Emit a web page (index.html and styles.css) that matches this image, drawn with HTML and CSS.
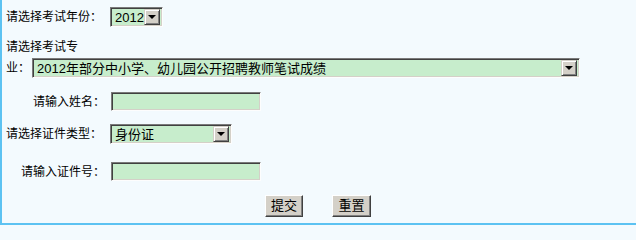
FILE: index.html
```html
<!DOCTYPE html>
<html lang="zh-CN">
<head>
<meta charset="utf-8">
<title>成绩查询</title>
<link rel="stylesheet" href="styles.css">
</head>
<body>
<div class="page">
  <div class="row r1">
    <span class="lbl">请选择考试年份：</span>
    <span class="sel sel-year"><span class="sel-text">2012</span><span class="arrow"></span></span>
  </div>
  <div class="row r2">
    <span class="lbl-plain">请选择考试专</span>
  </div>
  <div class="row r3">
    <span class="lbl-plain">业：</span>
    <span class="sel sel-exam"><span class="sel-text">2012年部分中小学、幼儿园公开招聘教师笔试成绩</span><span class="arrow"></span></span>
  </div>
  <div class="row r4">
    <span class="lbl lbl-r">请输入姓名：</span>
    <span class="inp inp-name"></span>
  </div>
  <div class="row r5">
    <span class="lbl">请选择证件类型：</span>
    <span class="sel sel-id"><span class="sel-text">身份证</span><span class="arrow"></span></span>
  </div>
  <div class="row r6">
    <span class="lbl lbl-r">请输入证件号：</span>
    <span class="inp inp-id"></span>
  </div>
  <div class="row r7">
    <span class="btn btn-submit">提交</span>
    <span class="btn btn-reset">重置</span>
  </div>
</div>
</body>
</html>
```

FILE: styles.css
```css
html, body {
  margin: 0;
  padding: 0;
  background: #f3fafe;
}

.page {
  box-sizing: border-box;
  width: 636px;
  height: 225px;
  background: #f3fafe;
  border-left: 2px solid #5cc2f2;
  border-bottom: 2px solid #5cc2f2;
  padding-left: 4px;
  display: flex;
  flex-direction: column;
  font-family: "Liberation Sans", "Noto Sans CJK SC", sans-serif;
  font-size: 12px;
  color: #000;
}

.row {
  display: flex;
  align-items: center;
}

.r1 { margin-top: 7px; height: 20px; }
.r2 { margin-top: 13px; height: 14px; }
.r3 { margin-top: 4px; height: 20px; }
.r4 { margin-top: 14px; height: 19px; }
.r5 { margin-top: 13px; height: 20px; }
.r6 { margin-top: 18px; height: 19px; }
.r7 { margin-top: 14px; height: 22px; padding-left: 259px; }

.lbl {
  box-sizing: border-box;
  width: 104px;
  flex: none;
  line-height: 14px;
  white-space: nowrap;
}

.lbl-r {
  text-align: right;
  padding-right: 5px;
}

.lbl-plain {
  line-height: 14px;
  white-space: nowrap;
  width: 26px;
  flex: none;
}

.sel, .inp {
  box-sizing: border-box;
  display: flex;
  align-items: center;
  background: #c7edcc;
  border-top: 1px solid #7a7a7a;
  border-left: 1px solid #7a7a7a;
  border-right: 1px solid #fdfdfd;
  border-bottom: 1px solid #fdfdfd;
  box-shadow: inset 1px 1px 0 #404040, inset -1px -1px 0 #d4d0c8;
  font-size: 13px;
  flex: none;
}

.sel { height: 20px; padding: 2px 2px 2px 4px; }

.sel-text {
  flex: 1;
  line-height: 15px;
  white-space: nowrap;
  overflow: hidden;
}

.sel-year { width: 53px; }
.sel-exam { width: 548px; }
.sel-id { width: 122px; }

.arrow {
  position: relative;
  box-sizing: border-box;
  width: 16px;
  height: 16px;
  flex: none;
  background: #d4d0c8;
  border-top: 1px solid #d4d0c8;
  border-left: 1px solid #d4d0c8;
  border-right: 1px solid #404040;
  border-bottom: 1px solid #404040;
  box-shadow: inset 1px 1px 0 #ffffff, inset -1px -1px 0 #808080;
}

.arrow::after {
  content: "";
  position: absolute;
  left: 3px;
  top: 5px;
  width: 0;
  height: 0;
  border-left: 4px solid transparent;
  border-right: 4px solid transparent;
  border-top: 4px solid #000;
}

.inp { height: 19px; margin-left: 1px; }
.inp-name { width: 150px; }
.inp-id { width: 150px; }

.btn {
  box-sizing: border-box;
  display: flex;
  align-items: center;
  justify-content: center;
  height: 22px;
  background: #d4d0c8;
  border-top: 1px solid #ffffff;
  border-left: 1px solid #ffffff;
  border-right: 1px solid #404040;
  border-bottom: 1px solid #404040;
  box-shadow: inset -1px -1px 0 #808080;
  font-size: 13px;
  line-height: 15px;
  padding-bottom: 1px;
}

.btn-submit { width: 38px; }
.btn-reset { width: 39px; margin-left: 29px; }
```
